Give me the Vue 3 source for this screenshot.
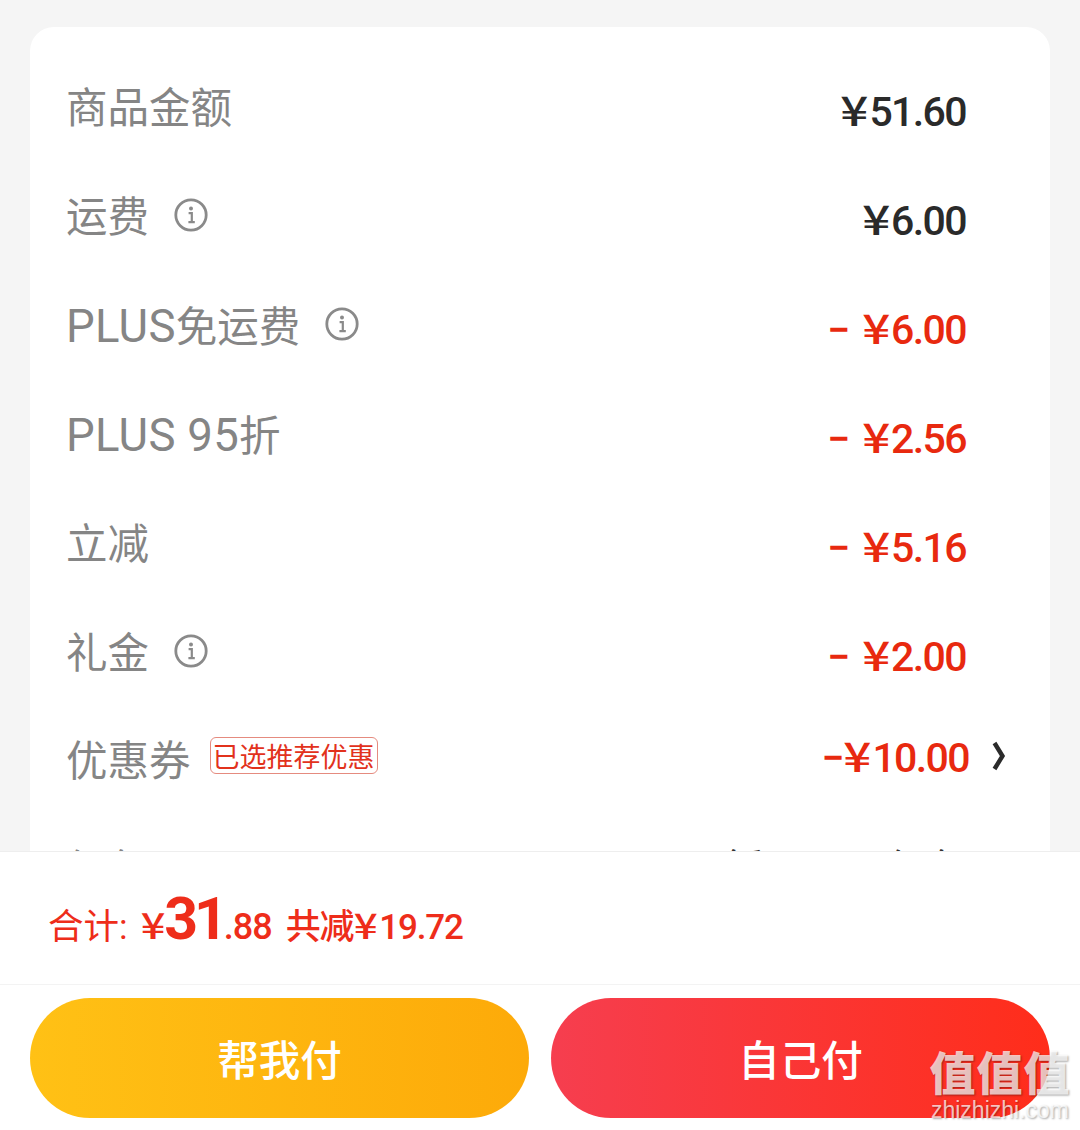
<script setup>
const rows = [
  { label: "商品金额", value: "51.60" },
  { label: "运费", value: "6.00", info: true },
  { latin: "PLUS", label: "免运费", value: "6.00", info: true, red: true },
  { latin: "PLUS 95", label: "折", value: "2.56", red: true },
  { label: "立减", value: "5.16", red: true },
  { label: "礼金", value: "2.00", info: true, red: true },
];
</script>

<template>
  <div class="page">
    <main class="scroll">
      <section class="card">
        <div v-for="row in rows" :key="row.latin + row.label" class="row">
          <span class="label" :class="{ mixed: row.latin }"><span v-if="row.latin" class="latin">{{ row.latin }}</span>{{ row.label }}</span>
          <svg v-if="row.info" class="info" viewBox="0 0 34 34">
            <circle cx="17" cy="17" r="15.2" fill="none" stroke="#8a8a8a" stroke-width="2.8" />
            <circle cx="17" cy="10.6" r="2" fill="#8a8a8a" />
            <path d="M14.6 15.2h3.2v8.6M14.4 24.2h6.4" fill="none" stroke="#8a8a8a" stroke-width="2.2" />
          </svg>
          <span class="value" :class="{ red: row.red }">
            <span v-if="row.red" class="sign">−</span><span class="cur">¥</span>{{ row.value }}
          </span>
        </div>
        <div class="row coupon">
          <span class="label">优惠券</span>
          <span class="tag">已选推荐优惠</span>
          <span class="value red tight">−<span class="cur">¥</span>10.00</span>
          <svg class="chevron" viewBox="0 0 14 30">
            <path d="M2.5 2l8 13-8 13" fill="none" stroke="#2b2b2b" stroke-width="4.4" />
          </svg>
        </div>
        <div class="row cut">
          <span class="label">红包</span>
          <span class="value dim">暂无可用红包</span>
          <svg class="chevron" viewBox="0 0 14 30">
            <path d="M2.5 2l8 13-8 13" fill="none" stroke="#2b2b2b" stroke-width="4.4" />
          </svg>
        </div>
      </section>
    </main>

    <footer class="footer">
      <div class="total">
        <span class="total-label">合计:</span>
        <span class="yen cur">¥</span>
        <span class="big">31</span>
        <span class="cents">.88</span>
        <span class="saved">共减<span class="cur">¥</span>19.72</span>
      </div>
      <div class="actions">
        <button class="btn friend">帮我付</button>
        <button class="btn self">自己付</button>
      </div>
    </footer>

    <div class="watermark">
      <div class="wm-mark">值值值</div>
      <div class="wm-url">zhizhizhi.com</div>
    </div>
  </div>
</template>

<style>
html,
body {
  margin: 0;
  background: #f5f5f5;
}
</style>

<style scoped>
.page {
  position: relative;
  display: flex;
  flex-direction: column;
  width: 1080px;
  height: 1130px;
  overflow: hidden;
  background: #f5f5f5;
  font-family: "Noto Sans CJK SC", "Noto Sans", sans-serif;
}
.scroll {
  height: 851px;
  padding: 27px 30px 0;
  box-sizing: border-box;
  overflow: hidden;
}
.card {
  padding: 27px 84px 0 37px;
  background: #fff;
  border-radius: 24px;
  height: 900px;
}
.row {
  display: flex;
  align-items: center;
  height: 109px;
}
.label {
  margin-left: -1px;
  padding-bottom: 7px;
  font-size: 41.5px;
  line-height: 54px;
  color: #858585;
}
.label.mixed {
  padding-bottom: 2px;
}
.latin {
  font-family: Roboto, sans-serif;
  font-size: 45.5px;
  letter-spacing: 0.3px;
}
.info {
  width: 34px;
  height: 34px;
  margin: 0 0 6px 25px;
}
.value {
  margin-left: auto;
  padding-bottom: 2px;
  font-family: Roboto, "Noto Sans CJK SC", sans-serif;
  font-size: 41px;
  font-weight: 500;
  letter-spacing: -1.6px;
  color: #2a2a2a;
  white-space: pre;
}
.cur {
  display: inline-block;
  margin-left: 3px;
  font-family: "Noto Sans CJK SC", sans-serif;
  letter-spacing: 1px;
  transform: scaleX(1.2);
  transform-origin: right center;
}
.sign {
  margin-right: 15px;
}
.red {
  color: #e8290f;
}
.tag {
  margin: 0 0 6px 19px;
  padding: 0 2px;
  border: 1px solid #e58b7f;
  border-radius: 6px;
  font-size: 27px;
  line-height: 35px;
  color: #e2321c;
}
.coupon {
  height: 100px;
}
.coupon .label {
  padding-bottom: 0;
}
.coupon .tight {
  padding-bottom: 9px;
}
.coupon .chevron {
  margin-bottom: 5px;
}
.tight .cur {
  margin-left: 5px;
}
.chevron {
  width: 14px;
  height: 30px;
  margin: 0 -40px 0 23px;
}
.cut {
  padding-top: 4px;
}
.cut .label {
  padding-bottom: 0;
}
.cut .dim {
  font-weight: 400;
  letter-spacing: 0;
  color: #333;
}
.footer {
  flex: 1;
  position: relative;
  background: #fff;
  border-top: 1px solid #eee;
}
.total {
  display: flex;
  align-items: baseline;
  height: 133px;
  padding: 32px 0 0 48px;
  box-sizing: border-box;
  border-bottom: 1px solid #f3f3f3;
  color: #ee2d1a;
  font-family: Roboto, "Noto Sans CJK SC", sans-serif;
}
.total-label {
  font-size: 35.5px;
}
.yen {
  margin-left: 17px;
  font-size: 36px;
  font-weight: 500;
}
.big {
  font-size: 59px;
  font-weight: 700;
  letter-spacing: -4px;
  margin-left: -2px;
}
.cents {
  font-size: 36px;
  font-weight: 500;
  letter-spacing: -1px;
}
.saved {
  margin-left: 14px;
  font-size: 35px;
  font-weight: 500;
  letter-spacing: -1.2px;
}
.saved .cur {
  margin-left: 5px;
}
.actions {
  display: flex;
  gap: 22px;
  padding: 13px 30px 0;
}
.btn {
  flex: 1;
  height: 120px;
  border: 0;
  border-radius: 60px;
  font-family: inherit;
  font-size: 41.5px;
  font-weight: 500;
  color: #fff;
}
.friend {
  background: linear-gradient(90deg, #ffc115, #fdaa09);
}
.self {
  background: linear-gradient(90deg, #f63e4f, #ff2d1a);
}
.watermark {
  position: absolute;
  right: 8px;
  bottom: 8px;
  width: 144px;
  text-align: center;
  color: rgba(255, 255, 255, 0.72);
  text-shadow: 1px 1px 2px rgba(0, 0, 0, 0.35);
}
.wm-mark {
  font-size: 46px;
  line-height: 56px;
  font-weight: 900;
  letter-spacing: 1px;
}
.wm-url {
  font-family: "Liberation Sans", sans-serif;
  font-size: 23px;
  line-height: 24px;
}
</style>
